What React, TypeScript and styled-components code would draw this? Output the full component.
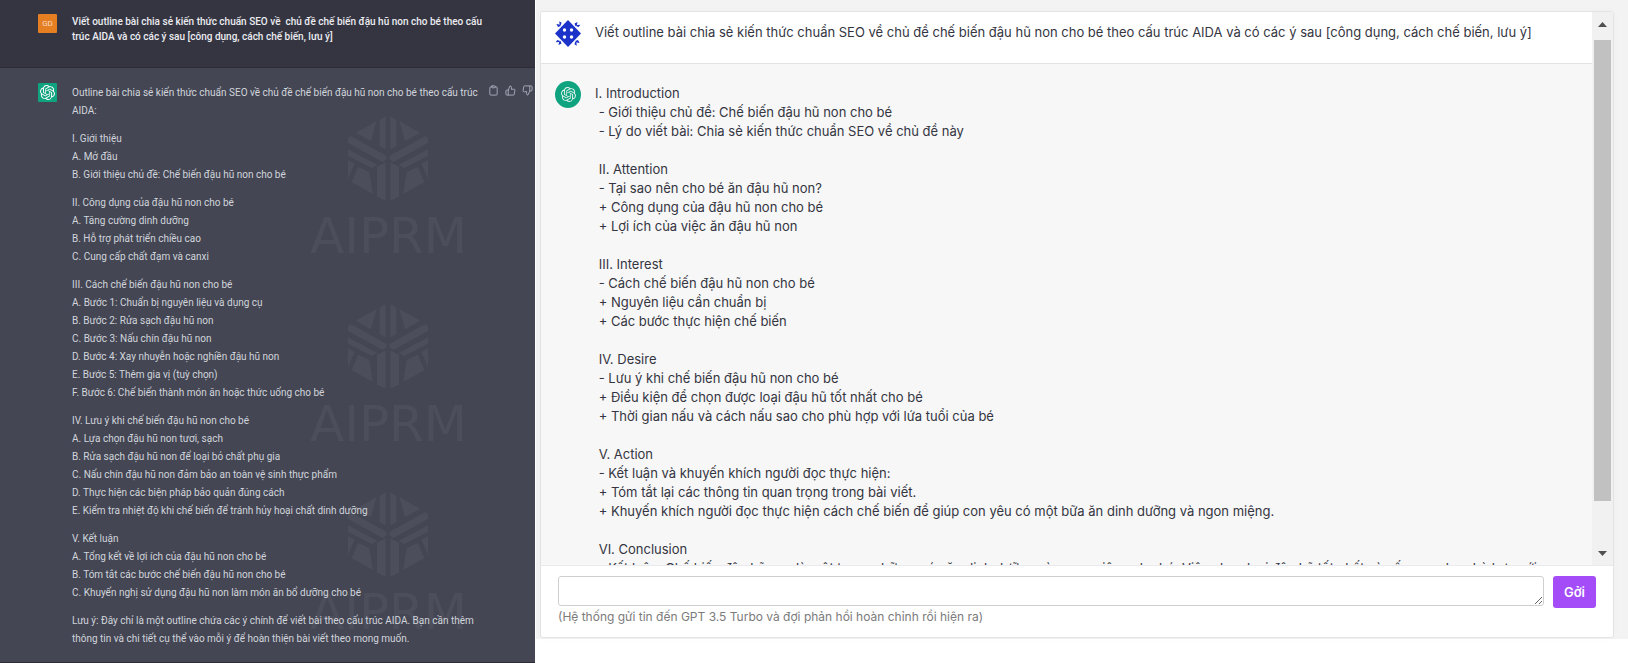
import React from 'react';
import styled, { createGlobalStyle } from 'styled-components';
import { FiClipboard, FiThumbsDown, FiThumbsUp } from 'react-icons/fi';
import { SiOpenai } from 'react-icons/si';

const GlobalStyle = createGlobalStyle`
  *, *::before, *::after { box-sizing: border-box; }
  body { margin: 0; background: #fff; }
`;

const Page = styled.div`
  display: grid;
  grid-template-columns: 535fr 1093fr;
  min-height: 100vh;
`;

/* ---------- Dark conversation ---------- */

const DarkPanel = styled.section`
  display: flex;
  flex-direction: column;
  background: #444654;
  color: #d1d5db;
  font: 10px/18px Roboto, "Liberation Sans", sans-serif;
`;

const DarkMessage = styled.article<{ $answer?: boolean }>`
  position: relative;
  display: flex;
  align-items: flex-start;
  flex: ${(p) => (p.$answer ? '1' : '0 0 68px')};
  padding: ${(p) => (p.$answer ? '15px 2px 12px 38px' : '14px 44px 14px 38px')};
  overflow: hidden;
  background: ${(p) => (p.$answer ? '#444654' : '#343541')};
  border-bottom: 1px solid #2b2c36;
`;

const SquareAvatar = styled.div<{ $color: string }>`
  display: flex;
  align-items: center;
  justify-content: center;
  flex: 0 0 19px;
  height: 19px;
  margin-right: 15px;
  border-radius: 1px;
  background: ${(p) => p.$color};
  color: #f6dcc4;
  font-size: 8px;
  svg { width: 15px; height: 15px; color: #fff; }
`;

const Prompt = styled.p`
  flex: 1;
  margin: 0;
  color: #ececf1;
  font-weight: 500;
  line-height: 15px;
`;

const Answer = styled.div`
  position: relative;
  display: flex;
  flex: 1;
  flex-direction: column;
  gap: 10px;
  min-width: 0;
  padding-top: 1px;
`;

const Stanza = styled.p`
  margin: 0;
  white-space: pre-line;
`;

const Actions = styled.div`
  display: flex;
  gap: 6px;
  margin-left: 6px;
  padding-top: 2px;
`;

const IconButton = styled.button`
  display: flex;
  padding: 0;
  border: 0;
  background: none;
  color: #acacbe;
  cursor: pointer;
  svg { width: 11px; height: 11px; }
`;

const Watermarks = styled.div`
  position: absolute;
  top: 48px;
  left: 310px;
  display: flex;
  flex-direction: column;
  gap: 43px;
  color: #4c4e5b;
  pointer-events: none;
`;

const Watermark = styled.div`
  display: flex;
  flex-direction: column;
  align-items: center;
  gap: 10px;
  font: 50px/50px "DejaVu Sans", sans-serif;
  svg { display: block; width: 80px; height: 85px; }
`;

const HALF_MARK = [
  '165,98 228,63 211,124',
  '237,59 255,48 255,148 237,139',
  '142,115 150,108 258,168 258,178 246,186 142,129',
  '142,148 230,195 213,204 142,167',
  '142,181 162,191 142,237',
  '172,200 206,216 216,282 153,247',
  '229,200 255,187 255,302 229,290',
];

function HexMark() {
  const half = HALF_MARK.map((points) => <polygon key={points} points={points} />);
  return (
    <svg viewBox="142 48 240 255" fill="currentColor" aria-hidden="true">
      <g>{half}</g>
      <g transform="matrix(-1 0 0 1 524 0)">{half}</g>
    </svg>
  );
}

/* ---------- Light conversation ---------- */

const LightPanel = styled.section`
  height: calc(100vh - 24px);
  margin-left: 1px;
  padding: 11px 14px 1px 4px;
  background: #f3f3f3;
  font-family: Inter, "Liberation Sans", sans-serif;
`;

const Card = styled.div`
  display: flex;
  flex-direction: column;
  height: 100%;
  overflow: hidden;
  border: 1px solid #e3e3e3;
  border-radius: 3px;
  background: #fff;
  box-shadow: 0 0 8px rgba(0, 0, 0, 0.02);
`;

const Viewport = styled.div`
  display: flex;
  flex: 1;
  min-height: 0;
`;

const History = styled.div`
  flex: 1;
  overflow-y: auto;
  scrollbar-width: none;
  background: #f7f7f7;
`;

const LightMessage = styled.article<{ $answer?: boolean }>`
  display: flex;
  align-items: flex-start;
  gap: 14px;
  padding: ${(p) => (p.$answer ? '17px 36px 17px 14px' : '8px 36px 16px 14px')};
  border-bottom: 1px solid #e3e3e3;
  background: ${(p) => (p.$answer ? '#f7f7f7' : '#fff')};
`;

const RoundAvatar = styled.div<{ $color?: string }>`
  display: flex;
  align-items: center;
  justify-content: center;
  flex: 0 0 26px;
  height: 27px;
  border-radius: 50%;
  background: ${(p) => p.$color ?? 'none'};
  color: #e4f5f0;
`;

const LightText = styled.p`
  flex: 1;
  margin: 0;
  padding: 3px 0;
  color: #343541;
  font-size: 13px;
  line-height: 19px;
  white-space: pre-wrap;
`;

const ScrollTrack = styled.div`
  display: flex;
  flex-direction: column;
  flex: 0 0 21px;
  align-items: center;
  background: #f1f1f1;
`;

const ScrollThumb = styled.div`
  flex: 0 1 461px;
  width: 17px;
  background: #c1c1c1;
`;

const ScrollArrow = styled.button<{ $down?: boolean }>`
  display: flex;
  align-items: center;
  justify-content: center;
  width: 17px;
  height: ${(p) => (p.$down ? '24px' : '28px')};
  margin-top: ${(p) => (p.$down ? 'auto' : '0')};
  padding: ${(p) => (p.$down ? '0' : '0 0 4px')};
  border: 0;
  background: none;
  svg { display: block; }
`;

const Composer = styled.form`
  padding: 10px 17px 12px;
  border-top: 1px solid #e9e9ee;
`;

const ComposerRow = styled.div`
  display: flex;
  align-items: flex-start;
  gap: 9px;
`;

const MessageBox = styled.textarea`
  flex: 1;
  height: 30px;
  padding: 4px 8px;
  border: 1px solid #cfcfcf;
  border-radius: 3px;
  background: #fff;
  color: #343541;
  font: 13px/19px Inter, sans-serif;
  resize: vertical;
`;

const SendButton = styled.button`
  width: 43px;
  height: 32px;
  padding: 0;
  border: 0;
  border-radius: 3px;
  background: #a34cf7;
  color: #fff;
  font: 600 13px/19px Inter, sans-serif;
`;

const Hint = styled.label`
  display: block;
  color: #7b7b7b;
  font-size: 12px;
  line-height: 17px;
`;

function Identicon() {
  return (
    <svg width="26" height="27" viewBox="0 0 26 27" fill="#1c33c9" aria-hidden="true">
      <path d="M13 0 26 13.5 13 27 0 13.5Z" />
      {[0, 1, 2, 3].map((corner) => (
        <g key={corner} transform={`rotate(${corner * 90} 13 13.5)`}>
          <path d="M4.2 1.2 6.6 2.8 5.6 5.6 4.6 4.4ZM1.4 4 4.4 4.6 5.8 6 3 7Z" />
        </g>
      ))}
      <g fill="#fff">
        <circle cx="9.5" cy="10" r="1.7" />
        <circle cx="16.5" cy="10" r="1.7" />
        <circle cx="9.5" cy="17" r="1.7" />
        <circle cx="16.5" cy="17" r="1.7" />
      </g>
    </svg>
  );
}

const DARK_ANSWER = [
  'Outline bài chia sẻ kiến thức chuẩn SEO về chủ đề chế biến đậu hũ non cho bé theo cấu trúc AIDA:',
  'I. Giới thiệu\nA. Mở đầu\nB. Giới thiệu chủ đề: Chế biến đậu hũ non cho bé',
  'II. Công dụng của đậu hũ non cho bé\nA. Tăng cường dinh dưỡng\nB. Hỗ trợ phát triển chiều cao\nC. Cung cấp chất đạm và canxi',
  'III. Cách chế biến đậu hũ non cho bé\nA. Bước 1: Chuẩn bị nguyên liệu và dụng cụ\nB. Bước 2: Rửa sạch đậu hũ non\nC. Bước 3: Nấu chín đậu hũ non\nD. Bước 4: Xay nhuyễn hoặc nghiền đậu hũ non\nE. Bước 5: Thêm gia vị (tuỳ chọn)\nF. Bước 6: Chế biến thành món ăn hoặc thức uống cho bé',
  'IV. Lưu ý khi chế biến đậu hũ non cho bé\nA. Lựa chọn đậu hũ non tươi, sạch\nB. Rửa sạch đậu hũ non để loại bỏ chất phụ gia\nC. Nấu chín đậu hũ non đảm bảo an toàn vệ sinh thực phẩm\nD. Thực hiện các biện pháp bảo quản đúng cách\nE. Kiểm tra nhiệt độ khi chế biến để tránh hủy hoại chất dinh dưỡng',
  'V. Kết luận\nA. Tổng kết về lợi ích của đậu hũ non cho bé\nB. Tóm tắt các bước chế biến đậu hũ non cho bé\nC. Khuyến nghị sử dụng đậu hũ non làm món ăn bổ dưỡng cho bé',
  'Lưu ý: Đây chỉ là một outline chứa các ý chính để viết bài theo cấu trúc AIDA. Bạn cần thêm thông tin và chi tiết cụ thể vào mỗi ý để hoàn thiện bài viết theo mong muốn.',
];

const LIGHT_ANSWER = `I. Introduction
 - Giới thiệu chủ đề: Chế biến đậu hũ non cho bé
 - Lý do viết bài: Chia sẻ kiến thức chuẩn SEO về chủ đề này

 II. Attention
 - Tại sao nên cho bé ăn đậu hũ non?
 + Công dụng của đậu hũ non cho bé
 + Lợi ích của việc ăn đậu hũ non

 III. Interest
 - Cách chế biến đậu hũ non cho bé
 + Nguyên liệu cần chuẩn bị
 + Các bước thực hiện chế biến

 IV. Desire
 - Lưu ý khi chế biến đậu hũ non cho bé
 + Điều kiện để chọn được loại đậu hũ tốt nhất cho bé
 + Thời gian nấu và cách nấu sao cho phù hợp với lứa tuổi của bé

 V. Action
 - Kết luận và khuyến khích người đọc thực hiện:
 + Tóm tắt lại các thông tin quan trọng trong bài viết.
 + Khuyến khích người đọc thực hiện cách chế biến để giúp con yêu có một bữa ăn dinh dưỡng và ngon miệng.

 VI. Conclusion
 - Kết luận: Chế biến đậu hũ non là một trong những món ăn dinh dưỡng và ngon miệng cho bé. Việc chọn loại đậu hũ tốt nhất và nấu sao cho phù hợp với lứa tuổi của bé.`;

export default function App() {
  return (
    <>
      <GlobalStyle />
      <Page>
        <DarkPanel>
          <DarkMessage>
            <SquareAvatar $color="#e67e22">GD</SquareAvatar>
            <Prompt>
              Viết outline bài chia sẻ kiến thức chuẩn SEO về{'\u00a0'} chủ đề chế biến đậu hũ non cho bé theo cấu
              trúc AIDA và có các ý sau [công dụng, cách chế biến, lưu ý]
            </Prompt>
          </DarkMessage>
          <DarkMessage $answer>
            <Watermarks aria-hidden="true">
              {[0, 1, 2].map((n) => (
                <Watermark key={n}>
                  <HexMark />
                  AIPRM
                </Watermark>
              ))}
            </Watermarks>
            <SquareAvatar $color="#10a37f">
              <SiOpenai />
            </SquareAvatar>
            <Answer>
              {DARK_ANSWER.map((text) => (
                <Stanza key={text}>{text}</Stanza>
              ))}
            </Answer>
            <Actions>
              <IconButton aria-label="Copy"><FiClipboard /></IconButton>
              <IconButton aria-label="Good response"><FiThumbsUp /></IconButton>
              <IconButton aria-label="Bad response"><FiThumbsDown /></IconButton>
            </Actions>
          </DarkMessage>
        </DarkPanel>

        <LightPanel>
          <Card>
            <Viewport>
              <History>
                <LightMessage>
                  <RoundAvatar><Identicon /></RoundAvatar>
                  <LightText>
                    Viết outline bài chia sẻ kiến thức chuẩn SEO về chủ đề chế biến đậu hũ non cho bé theo cấu trúc AIDA và có các ý sau [công dụng, cách chế biến, lưu ý]
                  </LightText>
                </LightMessage>
                <LightMessage $answer>
                  <RoundAvatar $color="#10a37f"><SiOpenai size={15} /></RoundAvatar>
                  <LightText>{LIGHT_ANSWER}</LightText>
                </LightMessage>
              </History>
              <ScrollTrack>
                <ScrollArrow aria-label="Scroll up">
                  <svg width="9" height="5" viewBox="0 0 18 10" fill="#505050"><path d="M9 0 18 10H0Z" /></svg>
                </ScrollArrow>
                <ScrollThumb />
                <ScrollArrow $down aria-label="Scroll down">
                  <svg width="9" height="5" viewBox="0 0 18 10" fill="#505050"><path d="M0 0H18L9 10Z" /></svg>
                </ScrollArrow>
              </ScrollTrack>
            </Viewport>
            <Composer onSubmit={(e) => e.preventDefault()}>
              <ComposerRow>
                <MessageBox id="message" />
                <SendButton type="submit">Gởi</SendButton>
              </ComposerRow>
              <Hint htmlFor="message">(Hệ thống gửi tin đến GPT 3.5 Turbo và đợi phản hồi hoàn chỉnh rồi hiện ra)</Hint>
            </Composer>
          </Card>
        </LightPanel>
      </Page>
    </>
  );
}
